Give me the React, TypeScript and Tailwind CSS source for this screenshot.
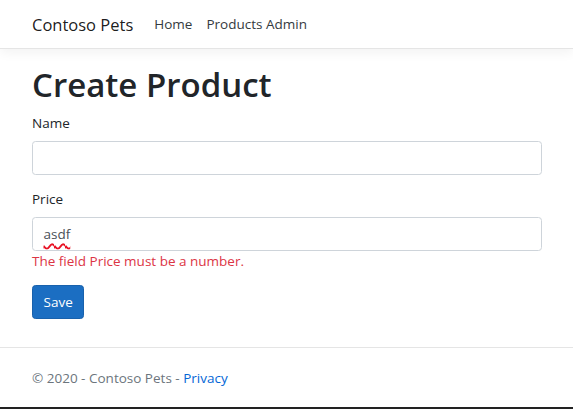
const font = "font-['Segoe_UI','Open_Sans','Noto_Sans',sans-serif]";

export default function App() {
  return (
    <div className={`flex h-[409px] flex-col bg-white text-[13.5px] leading-[21px] text-[#212529] ${font}`}>
      <header>
        <nav className="flex h-[49px] items-center border-b border-[#e5e5e5] px-[32px] shadow-[0_3.5px_10.5px_rgba(0,0,0,0.05)]">
          <a href="#" className="mr-[14px] text-[16.5px] text-black/90">
            Contoso Pets
          </a>
          <ul className="flex">
            <li>
              <a href="#" className="block px-[7px] text-[#343a40]">
                Home
              </a>
            </li>
            <li>
              <a href="#" className="block px-[7px] text-[#343a40]">
                Products Admin
              </a>
            </li>
          </ul>
        </nav>
      </header>

      <main className="pr-[31px] pl-[32px] pt-[15px]">
        <h1 className="mb-[7px] text-[33px] leading-[42px] font-semibold">Create Product</h1>
        <form>
          <div className="mb-[14px]">
            <label htmlFor="name" className="mb-[7px] block">
              Name
            </label>
            <input
              id="name"
              type="text"
              className="block h-[34px] w-full rounded-[3.5px] border border-[#ced4da] px-[10.5px] text-[#495057] outline-none"
            />
          </div>
          <div className="mb-[13px]">
            <label htmlFor="price" className="mb-[7px] block">
              Price
            </label>
            <div
              id="price"
              className="flex h-[34px] w-full items-center rounded-[3.5px] border border-[#ced4da] px-[10.5px] text-[#495057]"
            >
              <span className="underline decoration-[#e81123] decoration-wavy decoration-[1.5px] underline-offset-[4px]">
                asdf
              </span>
            </div>
            <span className="block text-[#dc3545]">The field Price must be a number.</span>
          </div>
          <button
            type="button"
            className="h-[34px] rounded-[3.5px] border border-[#1861ac] bg-[#1b6ec2] px-[10.5px] text-white"
          >
            Save
          </button>
        </form>
      </main>

      <footer className="mt-[28px] border-t border-[#e5e5e5] px-[32px] pt-[20px] text-[#6c757d]">
        © 2020 - Contoso Pets - <a href="#" className="text-[#0366d6]">Privacy</a>
      </footer>
      <div className="flex-1" />
      <div className="h-[2px] bg-[#222]" />
    </div>
  );
}
